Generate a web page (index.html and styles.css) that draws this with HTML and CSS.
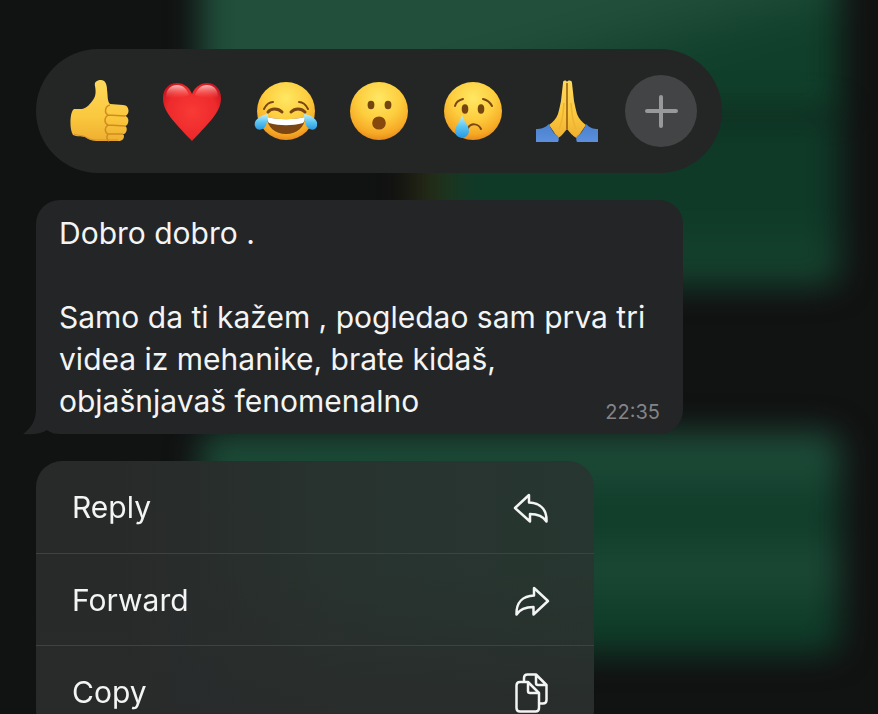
FILE: index.html
```html
<!DOCTYPE html>
<html lang="sr-Latn">
<head>
    <meta charset="UTF-8">
    <meta name="viewport" content="width=device-width, initial-scale=1.0">
    <title>Chat</title>
    <link rel="stylesheet" href="styles.css">
</head>
<body>
    <!-- Blurred conversation behind the menu -->
    <div class="backdrop" aria-hidden="true">
        <div class="blur-bubble blur-top"></div>
        <div class="blur-bubble blur-middle"></div>
        <div class="blur-bubble blur-bottom"></div>
    </div>

    <main class="overlay">
        <div class="reactions">
            <button type="button" class="reaction" aria-label="Thumbs up">
                <svg viewBox="0 0 64 64">
                    <defs>
                        <linearGradient id="hand" x1="0" y1="0" x2="0" y2="1">
                            <stop offset="0" stop-color="#ffd95c"/>
                            <stop offset="0.6" stop-color="#fac83e"/>
                            <stop offset="1" stop-color="#eeaf30"/>
                        </linearGradient>
                        <radialGradient id="face" cx="0.5" cy="0.28" r="0.75">
                            <stop offset="0" stop-color="#ffe763"/>
                            <stop offset="0.5" stop-color="#fdcd3e"/>
                            <stop offset="0.82" stop-color="#f6a925"/>
                            <stop offset="1" stop-color="#e5831a"/>
                        </radialGradient>
                        <radialGradient id="heart" cx="0.5" cy="0.5" r="0.6">
                            <stop offset="0" stop-color="#f83a35"/>
                            <stop offset="0.7" stop-color="#ee2a2c"/>
                            <stop offset="1" stop-color="#c9141f"/>
                        </radialGradient>
                        <linearGradient id="shine" x1="0" y1="0" x2="0" y2="1">
                            <stop offset="0" stop-color="#ffd9d6" stop-opacity="0.85"/>
                            <stop offset="1" stop-color="#ff6a60" stop-opacity="0"/>
                        </linearGradient>
                        <linearGradient id="tear" x1="0" y1="0" x2="0" y2="1">
                            <stop offset="0" stop-color="#c4f0fb"/>
                            <stop offset="0.5" stop-color="#5cc6f2"/>
                            <stop offset="1" stop-color="#2b98df"/>
                        </linearGradient>
                        <linearGradient id="sleeve" x1="0" y1="0" x2="0" y2="1">
                            <stop offset="0" stop-color="#4a80cf"/>
                            <stop offset="1" stop-color="#5c90dc"/>
                        </linearGradient>
                    </defs>
                    <path fill="url(#hand)" d="M36 1C32 1 29 3 30 7C31 12 31 17 28 21C25 25 22 29 17 30L9 30C5 32 4 50 8 56C12 58 17 57 20 58C25 62 30 62 36 62L53 62C57 62 59 60 59 57C59 56 58 55 58 55C62 55 63 48 60 47C64 46 65 38 60 37C65 36 65 26 58 26L45 25C42 22 43 16 42 11C42 5 40 1 36 1Z"/>
                    <path class="hand-line" d="M45 26C40 27 39 34 43 36L60 37M43 36C39 39 39 44 43 46L60 47M43 46C39 49 40 54 43 55L58 55M43 55C41 58 42 61 44 62"/>
                    <path class="hand-edge" d="M9 55C13 57 18 56 21 58C26 61 31 61 36 61L53 61"/>
                </svg>
            </button>
            <button type="button" class="reaction" aria-label="Heart">
                <svg viewBox="0 0 64 64">
                    <path fill="url(#heart)" d="M33 15C30 8 25 4 18 4C10 4 4 10 4 19C4 32 13 41 33 62C53 41 62 32 62 19C62 10 56 4 48 4C41 4 36 8 33 15Z"/>
                    <path fill="url(#shine)" d="M7 18C7 10 12 6 18 6C24 6 28 10 30 16C22 20 12 20 7 18Z"/>
                    <path fill="url(#shine)" d="M59 18C59 10 54 6 48 6C42 6 38 10 36 16C44 20 54 20 59 18Z"/>
                </svg>
            </button>
            <button type="button" class="reaction" aria-label="Tears of joy">
                <svg viewBox="0 0 64 64">
                    <circle cx="33" cy="32" r="29" fill="url(#face)"/>
                    <path class="brow" d="M11 30C13 26 16 23 20 23M46 23C50 23 53 26 55 30"/>
                    <path class="smile-eye" d="M15 33C18 29 25 29 29 33M38 33C42 29 48 29 52 33"/>
                    <path fill="#7b4611" d="M14 38C26 41 40 41 52 38C52 48 44 55 33 55C22 55 14 48 14 38Z"/>
                    <path fill="#fff" d="M14 38C26 41 40 41 52 38C52 41 51 43 50 44C39 47 27 47 16 44C15 43 14 41 14 38Z"/>
                    <path fill="url(#tear)" d="M15 35C8 36 0 41 2 47C3 52 11 52 13 46C14 43 15 40 15 35Z"/>
                    <path fill="url(#tear)" d="M51 35C58 36 66 41 64 47C63 52 55 52 53 46C52 43 51 40 51 35Z"/>
                </svg>
            </button>
            <button type="button" class="reaction" aria-label="Surprised">
                <svg viewBox="0 0 64 64">
                    <circle cx="32" cy="32" r="29" fill="url(#face)"/>
                    <ellipse cx="24" cy="26" rx="3.4" ry="4.2" fill="#74450f"/>
                    <ellipse cx="41" cy="26" rx="3.4" ry="4.2" fill="#74450f"/>
                    <ellipse cx="32" cy="44" rx="6.8" ry="6.6" fill="#87480e"/>
                </svg>
            </button>
            <button type="button" class="reaction" aria-label="Crying">
                <svg viewBox="0 0 64 64">
                    <circle cx="32" cy="32" r="29" fill="url(#face)"/>
                    <path class="brow" d="M14 27C15 23 18 21 22 20M42 20C46 21 49 23 51 27"/>
                    <ellipse cx="24" cy="30" rx="3.3" ry="4.8" fill="#74450f"/>
                    <ellipse cx="40" cy="30" rx="3.3" ry="4.8" fill="#74450f"/>
                    <path class="frown" d="M27 49C30 44 37 44 40 50"/>
                    <path fill="url(#tear)" d="M21 36C19 43 14 47 14 52C14 61 28 61 28 52C28 47 23 43 21 36Z"/>
                </svg>
            </button>
            <button type="button" class="reaction" aria-label="Folded hands">
                <svg viewBox="0 0 64 64">
                    <path fill="url(#hand)" d="M32 3C31 1 28 1 28 4L26 22C25 27 24 31 23 35C21 40 18 43 14 46L23 59C27 57 29 53 32 50C35 53 37 57 42 59L51 46C47 43 44 40 42 35C41 31 40 27 39 22L37 4C37 1 33 1 32 3Z"/>
                    <path fill="url(#sleeve)" d="M14 45C10 49 6 50 1 50V63H23C24 61 24 59 23 57C19 55 16 50 14 45Z"/>
                    <path fill="url(#sleeve)" d="M51 45C55 49 58 50 63 50V63H42C41 61 41 59 42 57C46 55 49 50 51 45Z"/>
                    <path class="palm-line" d="M32 4V50"/>
                    <path class="palm-crease" d="M29 24C28 34 28 42 24 50M36 24C37 34 37 42 41 50"/>
                </svg>
            </button>
            <button type="button" class="reaction more" aria-label="More reactions">
                <svg viewBox="0 0 64 64">
                    <path d="M32 18V47M18 32H47"/>
                </svg>
            </button>
        </div>

        <article class="message">
            <svg class="tail" viewBox="0 0 32 40" aria-hidden="true">
                <path d="M13 0V14C13 26 8 33 0 39C9 40 18 39 24 35L32 39V0Z"/>
            </svg>
            <p>Dobro dobro .</p>
            <p>Samo da ti kažem , pogledao sam prva tri videa iz mehanike, brate kidaš, objašnjavaš fenomenalno <time datetime="22:35">22:35</time></p>
        </article>

        <div class="menu">
            <button type="button" class="menu-item">
                <span>Reply</span>
                <svg viewBox="0 0 40 40">
                    <path d="M4 21L18 8V15.5C29 16 36 22 35.5 34.5C32 29 27 27 19 27V34.5Z"/>
                </svg>
            </button>
            <button type="button" class="menu-item">
                <span>Forward</span>
                <svg viewBox="0 0 40 40">
                    <path d="M37 21L23 8V15.5C12 16 5 22 5.5 34.5C9 29 14 27 22.5 27V34.5Z"/>
                </svg>
            </button>
            <button type="button" class="menu-item">
                <span>Copy</span>
                <svg viewBox="0 0 40 40">
                    <path d="M9 10H17L28 21V36Q28 39.5 24.5 39.5H9Q5.5 39.5 5.5 36V13.5Q5.5 10 9 10ZM17 10V19Q17 21 19 21H28"/>
                    <path d="M13 10V6Q13 2.5 16.5 2.5H25L35.5 13V28Q35.5 31.5 32 31.5H28M25 2.5V11Q25 13 27 13H35.5"/>
                </svg>
            </button>
        </div>
    </main>
</body>
</html>
```
FILE: styles.css
```css
* {
    box-sizing: border-box;
}
body {
    margin: 0;
    height: 100vh;
    overflow: hidden;
    background: #111212;
    color: #f3f4f4;
    font-family: Inter, "Liberation Sans", sans-serif;
    font-size: 30px;
    line-height: 42px;
}
button {
    border: none;
    padding: 0;
    background: none;
    color: inherit;
    font: inherit;
    cursor: pointer;
}

/* blurred chat */
.backdrop {
    position: fixed;
    inset: 0;
    overflow: hidden;
    padding: 0 38px 0 200px;
}
.blur-bubble {
    border-radius: 16px;
    filter: blur(16px);
}
.blur-top {
    height: 170px;
    margin-top: -50px;
    background: linear-gradient(165deg, #214f3c 50%, #103f2b 72%);
}
.blur-middle {
    height: 176px;
    margin: -10px 0 0 215px;
    background: linear-gradient(90deg, #33290f, rgba(51, 41, 15, 0) 12%), linear-gradient(#0f3a28 60%, #174431);
}
.blur-bottom {
    height: 222px;
    margin-top: 146px;
    background: linear-gradient(#1e4d3a, #1b4936 15%, #0f3b29 38%, #1c4936 62%, #0f3c29 85%);
}

.overlay {
    position: relative;
    display: flex;
    flex-direction: column;
    align-items: flex-start;
    gap: 27px;
    padding: 49px 36px 0;
}

/* reactions */
.reactions {
    display: flex;
    gap: 22px;
    padding: 26px 25px;
    border-radius: 62px;
    background: #242625;
}
.reaction {
    display: flex;
    align-items: center;
    justify-content: center;
    width: 72px;
    height: 72px;
    border-radius: 50%;
}
.reaction svg {
    width: 64px;
    height: 64px;
    fill: none;
}
.more {
    background: #434446;
}
.more path {
    stroke: #98999b;
    stroke-width: 4;
    stroke-linecap: round;
}
.hand-line {
    stroke: #d08c22;
    stroke-width: 1.5;
}
.hand-edge {
    stroke: #d9932a;
    stroke-width: 1;
}
.brow,
.frown {
    stroke: #7b4611;
    stroke-width: 2;
    stroke-linecap: round;
}
.smile-eye {
    stroke: #7b4611;
    stroke-width: 3;
    stroke-linecap: round;
}
.palm-line {
    stroke: #92570f;
    stroke-width: 1.5;
}
.palm-crease {
    stroke: #efb233;
    stroke-width: 1.5;
}

/* message */
.message {
    position: relative;
    max-width: 647px;
    padding: 12px 23px 10px;
    border-radius: 24px;
    background: #242527;
}
.message p {
    margin: 0;
}
.message p + p {
    margin-top: 42px;
}
.message time {
    float: right;
    margin-top: 20px;
    color: #838486;
    font-size: 20px;
    line-height: 24px;
}
.tail {
    position: absolute;
    left: -13px;
    bottom: -1px;
    width: 32px;
    height: 40px;
    fill: #242527;
}

/* context menu */
.menu {
    width: 100%;
    max-width: 558px;
    border-radius: 26px;
    overflow: hidden;
    background: linear-gradient(rgba(41, 43, 43, 0) 40%, #292b2b 100%), linear-gradient(90deg, #282929 10%, #28332f 55%, #273630);
}
.menu-item {
    display: flex;
    align-items: center;
    justify-content: space-between;
    width: 100%;
    height: 92px;
    padding: 0 43px 0 36px;
    text-align: left;
}
.menu-item + .menu-item {
    border-top: 1px solid #3d4341;
}
.menu-item svg {
    width: 40px;
    height: 40px;
    overflow: visible;
    fill: none;
    stroke: #f3f4f4;
    stroke-width: 2.5;
    stroke-linejoin: round;
}
```
